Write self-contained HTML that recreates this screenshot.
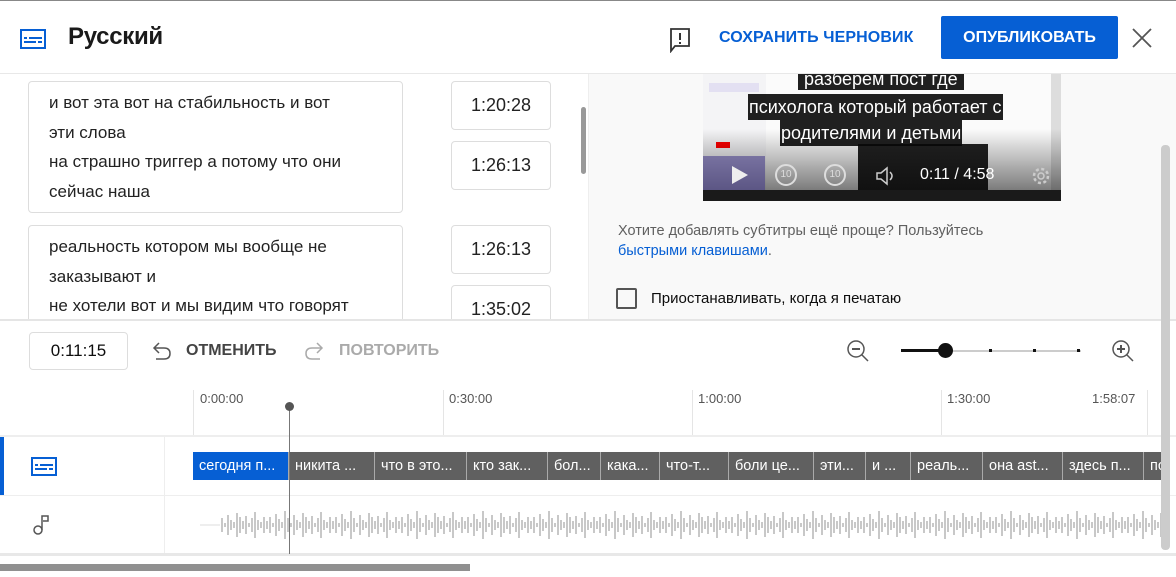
<!DOCTYPE html>
<html><head><meta charset="utf-8">
<style>
*{margin:0;padding:0;box-sizing:border-box}
body{width:1176px;height:577px;overflow:hidden;background:#fff;font-family:"Liberation Sans",Roboto,sans-serif;position:relative;color:#0d0d0d}
.a{position:absolute}
.box{position:absolute;border:1px solid #ddd;border-radius:4px;background:#fff}
.t{font-size:17px;line-height:29.5px;color:#222}
.time{position:absolute;border:1px solid #ddd;border-radius:4px;background:#fff;width:100px;height:49px;font-size:18px;text-align:center;line-height:47px;color:#222}
.seg{position:absolute;top:452px;height:28px;background:#606060;color:#fff;font-size:14.5px;line-height:28px;padding-left:6px;white-space:nowrap;overflow:hidden;border-right:1px solid #aaa}
.lbl{position:absolute;top:391px;font-size:13px;color:#555}
.tick{position:absolute;top:390px;width:1px;height:46px;background:#e5e5e5}
.sub{position:absolute;white-space:nowrap;background:rgba(8,8,8,.9);color:#fff;font-size:18px;line-height:26px}
</style></head><body>
<div class="a" style="left:0;top:0;width:1176px;height:1px;background:#888"></div>
<!-- header -->
<svg class="a" style="left:20px;top:29px" width="26" height="20" viewBox="0 0 26 20"><rect x="1" y="1" width="24" height="18" fill="#fff" stroke="#065fd4" stroke-width="2"/><rect x="4" y="8" width="3" height="2" fill="#065fd4"/><rect x="9" y="8" width="13" height="2" fill="#065fd4"/><rect x="4" y="12" width="12" height="2" fill="#065fd4"/><rect x="18" y="12" width="4" height="2" fill="#065fd4"/></svg>
<div class="a" style="left:68px;top:23px;font-size:24px;font-weight:bold;color:#1a1a1a;letter-spacing:-0.3px">Русский</div>
<svg class="a" style="left:669px;top:27px" width="22" height="26" viewBox="0 0 22 26"><path d="M2 2H20V19H6L2 24Z" fill="none" stroke="#333" stroke-width="1.8"/><rect x="10" y="6" width="2" height="7" fill="#333"/><rect x="10" y="15" width="2" height="2" fill="#333"/></svg>
<div class="a" style="left:719px;top:29px;font-size:16px;font-weight:bold;color:#065fd4;letter-spacing:0.1px">СОХРАНИТЬ ЧЕРНОВИК</div>
<div class="a" style="left:941px;top:16px;width:177px;height:43px;background:#065fd4;border-radius:2px;color:#fff;font-size:16px;font-weight:bold;text-align:center;line-height:43px">ОПУБЛИКОВАТЬ</div>
<svg class="a" style="left:1131px;top:27px" width="22" height="22" viewBox="0 0 22 22"><path d="M2 2L20 20M20 2L2 20" stroke="#555" stroke-width="1.8"/></svg>
<div class="a" style="left:0;top:73px;width:1176px;height:1px;background:#e8e8e8"></div>
<!-- left panel -->
<div class="a" style="left:0;top:74px;width:588px;height:245px;overflow:hidden">
<div class="box" style="left:28px;top:7px;width:375px;height:132px"></div>
<div class="a t" style="left:49px;top:14px">и вот эта вот на стабильность и вот<br>эти слова<br>на страшно триггер а потому что они<br>сейчас наша</div>
<div class="time" style="left:451px;top:7px">1:20:28</div>
<div class="time" style="left:451px;top:67px">1:26:13</div>
<div class="box" style="left:28px;top:151px;width:375px;height:110px"></div>
<div class="a t" style="left:49px;top:158px">реальность котором мы вообще не<br>заказывают и<br>не хотели вот и мы видим что говорят</div>
<div class="time" style="left:451px;top:151px">1:26:13</div>
<div class="time" style="left:451px;top:211px">1:35:02</div>
<div class="a" style="left:581px;top:33px;width:5px;height:67px;background:#999;border-radius:3px"></div>
</div>
<!-- right panel -->
<div class="a" style="left:588px;top:74px;width:588px;height:246px;background:#f9f9f9;border-left:1px solid #eee"></div>
<div class="a" style="left:703px;top:74px;width:358px;height:127px;background:#ddd;overflow:hidden">
 <div class="a" style="left:0;top:0;width:63px;height:127px;background:#f4f4f6"></div>
 <div class="a" style="left:6px;top:9px;width:50px;height:9px;background:#e3e0f2"></div>
 <div class="a" style="left:13px;top:68px;width:14px;height:6px;background:#f00"></div>
 <div class="a" style="left:63px;top:0;width:285px;height:127px;background:#fbfbfb"></div>
 <div class="a" style="left:155px;top:70px;width:130px;height:50px;background:#222"></div>
 <div class="a" style="left:0;top:55px;width:358px;height:72px;background:linear-gradient(rgba(0,0,0,0),rgba(0,0,0,.6))"></div>
 <div class="a" style="left:0;top:82px;width:62px;height:34px;background:#4a3f8c;opacity:.6"></div>
 <div class="a" style="left:0;top:116px;width:358px;height:11px;background:#1a1a1a"></div>
 <div class="sub" style="left:95px;top:-6px;padding:0 6px;line-height:22px">разберем пост где</div>
 <div class="sub" style="left:45px;top:20px;padding:0 1px">психолога который работает с</div>
 <div class="sub" style="left:77px;top:46px;padding:0 1px">родителями и детьми</div>
 <svg class="a" style="left:25px;top:90px" width="22" height="22"><path d="M4 2L20 11L4 20Z" fill="#eee"/></svg>
 <div class="a" style="left:72px;top:90px;width:22px;height:22px;border:2px solid #ddd;border-radius:50%;color:#ddd;font-size:10px;text-align:center;line-height:18px">10</div>
 <div class="a" style="left:121px;top:90px;width:22px;height:22px;border:2px solid #ddd;border-radius:50%;color:#ddd;font-size:10px;text-align:center;line-height:18px">10</div>
 <svg class="a" style="left:172px;top:92px" width="22" height="20"><path d="M2 7H6L12 2V18L6 13H2Z" fill="none" stroke="#ccc" stroke-width="1.5"/><path d="M15 6Q19 10 15 14" fill="none" stroke="#ccc" stroke-width="1.5"/></svg>
 <div class="a" style="left:217px;top:92px;color:#fff;font-size:16px">0:11 / 4:58</div>
 <svg class="a" style="left:328px;top:92px" width="20" height="20"><circle cx="10" cy="10" r="7" fill="none" stroke="#ccc" stroke-width="2.5" stroke-dasharray="3 2.5"/><circle cx="10" cy="10" r="3" fill="none" stroke="#ccc" stroke-width="1.5"/></svg>
</div>
<div class="a" style="left:618px;top:221px;font-size:14.5px;line-height:20px;color:#606060">Хотите добавлять субтитры ещё проще? Пользуйтесь<br><span style="color:#065fd4">быстрыми клавишами</span>.</div>
<div class="a" style="left:616px;top:288px;width:21px;height:21px;border:2px solid #555;border-radius:2px"></div>
<div class="a" style="left:651px;top:290px;font-size:15px;color:#0d0d0d">Приостанавливать, когда я печатаю</div>
<div class="a" style="left:0;top:319px;width:1176px;height:2px;background:#e5e5e5"></div>
<!-- toolbar -->
<div class="a" style="left:29px;top:332px;width:99px;height:38px;border:1px solid #ddd;border-radius:4px;font-size:17px;text-align:center;line-height:36px">0:11:15</div>
<svg class="a" style="left:151px;top:341px" width="22" height="20"><path d="M8 2L3 7L8 12M3 7H13Q19 7 19 12.5Q19 18 13 18H5" fill="none" stroke="#555" stroke-width="1.5"/></svg>
<div class="a" style="left:186px;top:342px;font-size:16px;font-weight:bold;color:#444">ОТМЕНИТЬ</div>
<svg class="a" style="left:303px;top:341px" width="22" height="20"><path d="M14 2L19 7L14 12M19 7H9Q3 7 3 12.5Q3 18 9 18H17" fill="none" stroke="#aaa" stroke-width="1.5"/></svg>
<div class="a" style="left:339px;top:342px;font-size:16px;font-weight:bold;color:#aaa">ПОВТОРИТЬ</div>
<svg class="a" style="left:846px;top:339px" width="24" height="24"><circle cx="10" cy="10" r="8" fill="none" stroke="#555" stroke-width="1.5"/><path d="M6 10H14" stroke="#555" stroke-width="2"/><path d="M16 16L22 22" stroke="#555" stroke-width="1.5"/></svg>
<div class="a" style="left:901px;top:350px;width:180px;height:2px;background:#ccc"></div>
<div class="a" style="left:901px;top:349px;width:45px;height:3px;background:#111"></div>
<div class="a" style="left:938px;top:343px;width:15px;height:15px;border-radius:50%;background:#111"></div>
<div class="a" style="left:989px;top:349px;width:3px;height:3px;background:#111"></div>
<div class="a" style="left:1033px;top:349px;width:3px;height:3px;background:#111"></div>
<div class="a" style="left:1077px;top:349px;width:3px;height:3px;background:#111"></div>
<svg class="a" style="left:1111px;top:339px" width="24" height="24"><circle cx="10" cy="10" r="8" fill="none" stroke="#555" stroke-width="1.5"/><path d="M6 10H14M10 6V14" stroke="#555" stroke-width="2"/><path d="M16 16L22 22" stroke="#555" stroke-width="1.5"/></svg>
<!-- ruler -->
<div class="tick" style="left:193px"></div><div class="tick" style="left:443px"></div><div class="tick" style="left:692px"></div><div class="tick" style="left:941px"></div><div class="tick" style="left:1147px"></div>
<div class="lbl" style="left:200px">0:00:00</div><div class="lbl" style="left:449px">0:30:00</div><div class="lbl" style="left:698px">1:00:00</div><div class="lbl" style="left:947px">1:30:00</div><div class="lbl" style="left:1092px">1:58:07</div>
<div class="a" style="left:0;top:435px;width:1176px;height:2px;background:#eee"></div>
<div class="a" style="left:0;top:495px;width:1176px;height:1px;background:#eee"></div>
<div class="a" style="left:0;top:553px;width:1176px;height:3px;background:#e8e8e8"></div>
<div class="a" style="left:164px;top:437px;width:1px;height:116px;background:#eee"></div>
<div class="a" style="left:0;top:437px;width:4px;height:58px;background:#065fd4"></div>
<svg class="a" style="left:31px;top:457px" width="26" height="20" viewBox="0 0 26 20"><rect x="1" y="1" width="24" height="17" fill="#fff" stroke="#065fd4" stroke-width="2"/><rect x="4" y="7" width="3" height="2" fill="#065fd4"/><rect x="9" y="7" width="13" height="2" fill="#065fd4"/><rect x="4" y="11" width="12" height="2" fill="#065fd4"/><rect x="18" y="11" width="4" height="2" fill="#065fd4"/></svg>
<svg class="a" style="left:33px;top:513px" width="20" height="24"><circle cx="5" cy="17" r="4" fill="none" stroke="#555" stroke-width="1.5"/><path d="M9 17V3H15V8H10" fill="none" stroke="#555" stroke-width="1.5"/></svg>
<!-- segments -->
<div class="seg" style="left:193px;width:96px;background:#065fd4">сегодня п...</div>
<div class="seg" style="left:289px;width:86px">никита ...</div>
<div class="seg" style="left:375px;width:92px">что в это...</div>
<div class="seg" style="left:467px;width:81px">кто зак...</div>
<div class="seg" style="left:548px;width:53px">бол...</div>
<div class="seg" style="left:601px;width:59px">кака...</div>
<div class="seg" style="left:660px;width:69px">что-т...</div>
<div class="seg" style="left:729px;width:85px">боли це...</div>
<div class="seg" style="left:814px;width:52px">эти...</div>
<div class="seg" style="left:866px;width:45px">и ...</div>
<div class="seg" style="left:911px;width:72px">реаль...</div>
<div class="seg" style="left:983px;width:80px">она ast...</div>
<div class="seg" style="left:1063px;width:81px">здесь п...</div>
<div class="seg" style="left:1144px;width:20px">по</div>
<!-- waveform -->
<svg class="a" style="left:200px;top:505px" width="962" height="40">
<defs><pattern id="w" width="66" height="40" patternUnits="userSpaceOnUse">
<path d="M1 16V24M4 12V28M7 18V22M10 9V31M13 14V26M16 17V23M19 6V34M22 13V27M25 18V22M28 10V30M31 15V25M34 17V23M37 8V32M40 12V28M43 16V24M46 11V29M49 18V22M52 13V27M55 7V33M58 15V25M61 17V23M64 12V28" stroke="#c8c8c8" stroke-width="2"/>
</pattern></defs>
<path d="M0 20H20" stroke="#ddd" stroke-width="1"/>
<rect x="20" y="0" width="942" height="40" fill="url(#w)"/>
</svg>
<!-- playhead -->
<div class="a" style="left:289px;top:406px;width:1px;height:148px;background:#777"></div>
<div class="a" style="left:285px;top:402px;width:9px;height:9px;border-radius:50%;background:#555"></div>
<!-- scrollbars -->
<div class="a" style="left:1161px;top:145px;width:9px;height:405px;background:#ccc;border-radius:4px"></div>
<div class="a" style="left:0;top:564px;width:470px;height:7px;background:#909090"></div>
</body></html>
